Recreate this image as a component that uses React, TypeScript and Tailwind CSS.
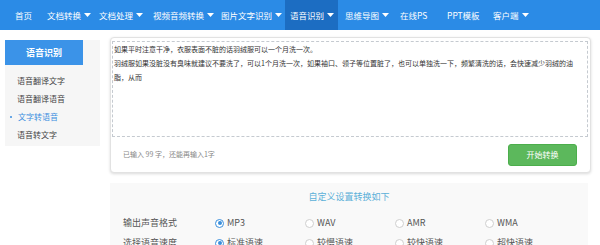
import React from 'react'

const NAV = [
  { label: '首页', w: 'w-[32px]', arrow: false },
  { label: '文档转换', w: 'w-[52px]', arrow: true },
  { label: '文档处理', w: 'w-[54px]', arrow: true },
  { label: '视频音频转换', w: 'w-[68px]', arrow: true },
  { label: '图片文字识别', w: 'w-[69px]', arrow: true },
  { label: '语音识别', w: 'w-[53px] bg-[#1c6dc2]', arrow: true },
  { label: '思维导图', w: 'w-[55px] ml-[2px]', arrow: true },
  { label: '在线PS', w: 'w-[47px]', arrow: false },
  { label: 'PPT模板', w: 'w-[46px]', arrow: false },
  { label: '客户端', w: 'w-[45px]', arrow: true },
]

const SIDE = ['语音翻译文字', '语音翻译语音', '文字转语音', '语音转文字']

function Caret() {
  return (
    <svg width="7" height="4" viewBox="0 0 7 4" className="ml-[3px] shrink-0">
      <path d="M0 0h7L3.5 4z" fill="#fff" />
    </svg>
  )
}

function Radio({ label, checked }: { label: string; checked?: boolean }) {
  return (
    <div className="w-[90px] flex items-center gap-[3px]">
      <span
        className={`w-[9px] h-[9px] rounded-full border flex items-center justify-center bg-white ${
          checked ? 'border-[#3a8fdc]' : 'border-[#cfcfcf]'
        }`}
      >
        {checked && <span className="w-[4px] h-[4px] rounded-full bg-[#3a8fdc]" />}
      </span>
      <span className="text-[9px] text-[#555]">{label}</span>
    </div>
  )
}

export default function App() {
  return (
    <div className="w-[600px] h-[245px] overflow-hidden bg-white font-['Noto_Sans_CJK_SC',sans-serif]">
      {/* top navigation */}
      <nav className="h-[30px] bg-[#2b8be6] flex items-stretch pl-[10px] text-white text-[8.5px]">
        {NAV.map(item => (
          <div key={item.label} className={`${item.w} flex items-center pl-[5px] whitespace-nowrap`}>
            {item.label}
            {item.arrow && <Caret />}
          </div>
        ))}
      </nav>

      <div className="flex pt-[7px]">
        {/* sidebar */}
        <aside className="ml-[5px] mt-[3px] w-[95px] h-[106px] bg-[#f6f6f6]">
          <div className="w-[78px] h-[25px] bg-[#3b93e8] text-white text-[9px] font-bold flex items-center justify-center">
            语音识别
          </div>
          <ul className="pt-[7px]">
            {SIDE.map(s =>
              s === '文字转语音' ? (
                <li key={s} className="h-[18px] flex items-center pl-[5px] text-[8px] text-[#3b8ee0]">
                  <span className="w-[2px] h-[2px] rounded-full bg-[#3b8ee0] mr-[6px]" />
                  {s}
                </li>
              ) : (
                <li key={s} className="h-[18px] flex items-center pl-[12px] text-[8px] text-[#444]">
                  {s}
                </li>
              )
            )}
          </ul>
        </aside>

        {/* main */}
        <main className="ml-[10px] flex flex-col">
          <div className="w-[481px] border border-[#e2e2e2] rounded-[4px] shadow-[0_1px_3px_rgba(0,0,0,0.15)] bg-white pt-[3px] px-[1px]">
            <div className="w-[476px] h-[96px] border border-dashed border-[#c5cad0] pl-[1px] text-[7px] leading-[14px] text-[#333] whitespace-nowrap">
              <div>如果平时注意干净，衣服表面不脏的话羽绒服可以一个月洗一次。</div>
              <div>羽绒服如果没脏没有臭味就建议不要洗了，可以1个月洗一次，如果袖口、领子等位置脏了，也可以单独洗一下，频繁清洗的话，会快速减少羽绒的油</div>
              <div>脂，从而</div>
            </div>
            <div className="h-[35px] flex items-center justify-between pl-[11px] pr-[12px]">
              <span className="text-[7px] text-[#888]">已输入 99 字，还能再输入1字</span>
              <button className="w-[69px] h-[22px] rounded-[3px] bg-[#5cb85c] border border-[#4cae4c] text-white text-[8px]">
                开始转换
              </button>
            </div>
          </div>

          <section className="mt-[10px] w-[478px] h-[80px] bg-[#f9f9f9]">
            <div className="pt-[7px] text-center text-[9px] leading-[14px] text-[#5bb0d8]">自定义设置转换如下</div>
            <div className="mt-[9px] h-[20px] flex items-center pl-[13px]">
              <span className="w-[92px] text-[9px] text-[#555]">输出声音格式</span>
              <Radio label="MP3" checked />
              <Radio label="WAV" />
              <Radio label="AMR" />
              <Radio label="WMA" />
            </div>
            <div className="h-[20px] flex items-center pl-[13px]">
              <span className="w-[92px] text-[9px] text-[#555]">选择语音速度</span>
              <Radio label="标准语速" checked />
              <Radio label="较慢语速" />
              <Radio label="较快语速" />
              <Radio label="超快语速" />
            </div>
          </section>
        </main>
      </div>
    </div>
  )
}
